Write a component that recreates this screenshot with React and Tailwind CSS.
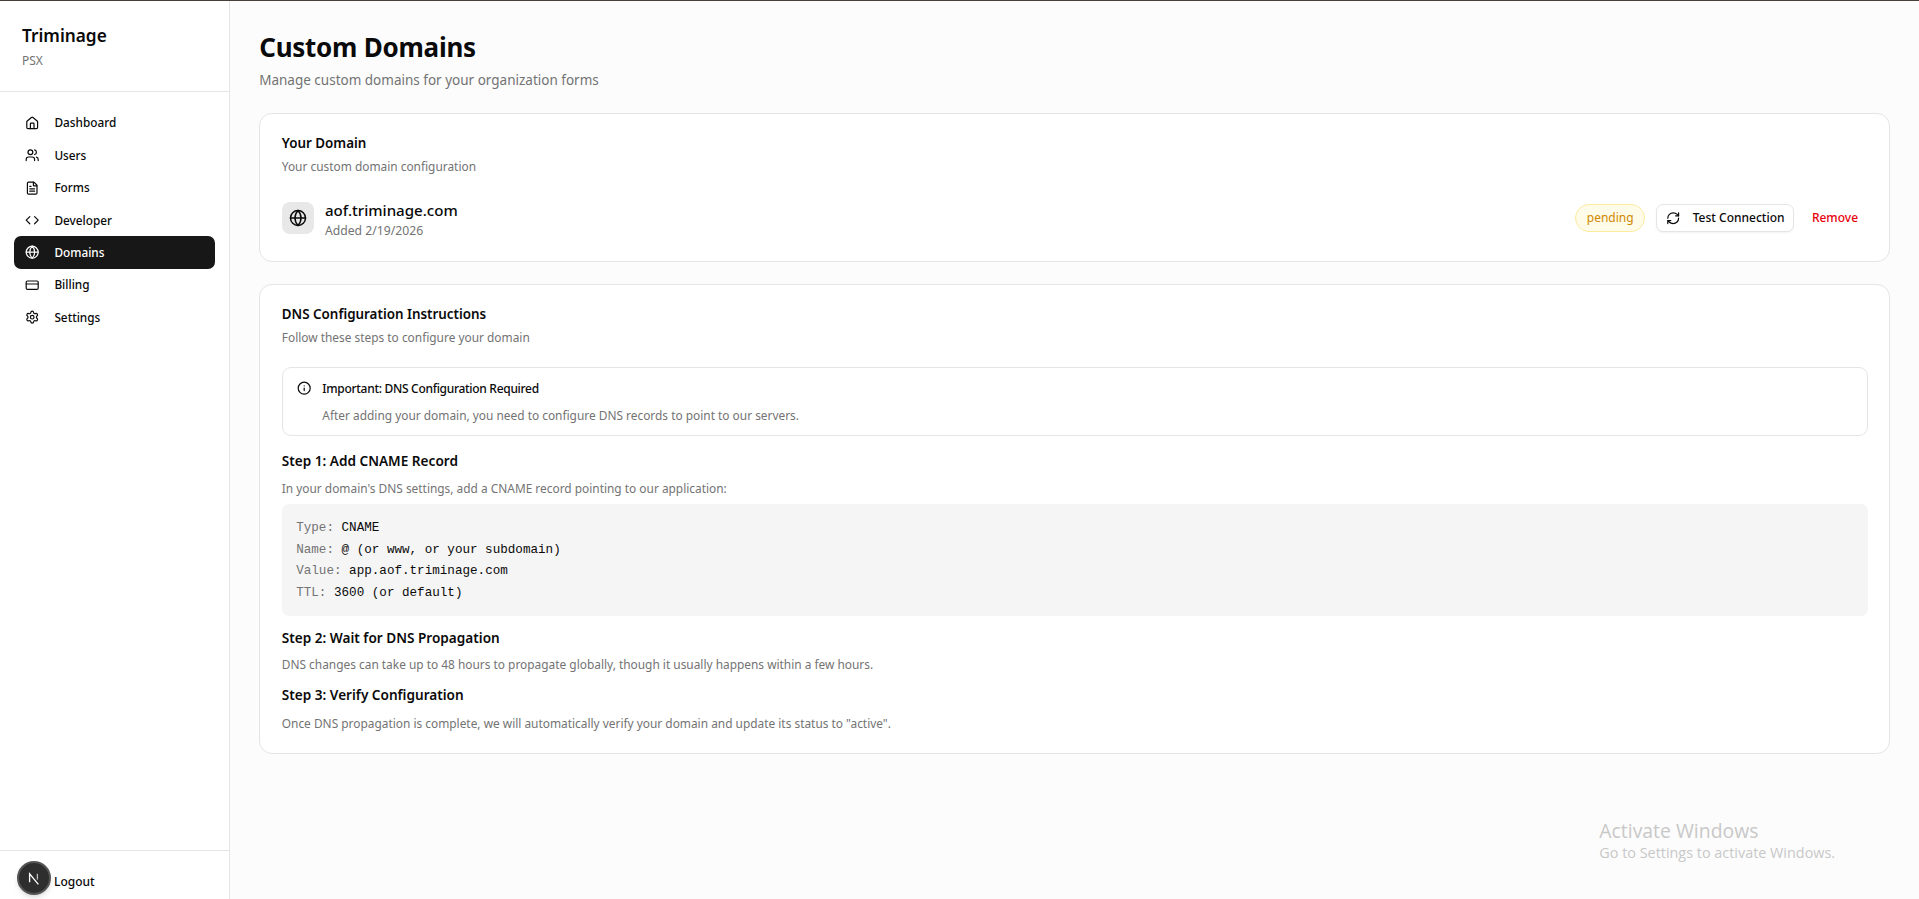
import React from "react";
import { Home, Users, FileText, Code, Globe, CreditCard, Settings, RefreshCw, Info } from "lucide-react";

const nav = [
  ["Dashboard", Home],
  ["Users", Users],
  ["Forms", FileText],
  ["Developer", Code],
  ["Domains", Globe],
  ["Billing", CreditCard],
  ["Settings", Settings],
];

function Row({ k, v }) {
  return (
    <div className="h-[21.6px] leading-[21.6px]">
      <span className="text-[#737373]">{k}:</span> <span className="text-[#0a0a0a]">{v}</span>
    </div>
  );
}

function NextLogo() {
  return (
    <svg width="16" height="16" viewBox="0 0 16 16" fill="none">
      <path d="M3.6 12.2V3.8L12.4 14.4" stroke="#fff" strokeWidth="1.3" />
      <path d="M11.4 3.8V9.6" stroke="#bbb" strokeWidth="1.3" />
    </svg>
  );
}

export default function App() {
  return (
    <div className="relative flex h-[899px] flex-col overflow-hidden bg-[#fcfcfc] font-['Noto_Sans',sans-serif] text-[#0a0a0a]">
      <div className="h-px bg-[#4a3f38]" />
      <div className="flex min-h-0 flex-1">
        <aside className="flex w-[230.4px] shrink-0 flex-col border-r border-[#e5e5e5] bg-white">
          <div className="h-[91px] border-b border-[#e5e5e5] pl-[22px] pt-[22px]">
            <div className="text-[17.25px] font-semibold leading-[26px]">Triminage</div>
            <div className="mt-[2.2px] text-[12px] leading-[20px] text-[#737373]">PSX</div>
          </div>
          <nav className="flex flex-1 flex-col px-[14.4px] pt-[14.8px]">
            {nav.map(([label, Icon]) => {
              const active = label === "Domains";
              return (
                <div
                  key={label}
                  className={
                    active
                      ? "flex h-[32.4px] w-[201px] items-center gap-[14.8px] rounded-[7px] bg-[#171717] pl-[10.8px] text-[11.8px] font-medium text-white"
                      : "flex h-[32.4px] w-[201px] items-center gap-[14.8px] rounded-[7px] pl-[10.8px] text-[11.8px] font-medium text-[#0a0a0a]"
                  }
                >
                  <Icon size={14.4} strokeWidth={2} />
                  <span className="pt-[0.6px]">{label}</span>
                </div>
              );
            })}
          </nav>
          <div className="relative h-[49px] border-t border-[#e5e5e5] pl-[54px] pt-[20.6px] text-[12px] font-medium leading-[20px]">
            Logout
            <div className="absolute left-[17px] top-[10px] flex h-[34px] w-[34px] items-center justify-center rounded-full border-2 border-[#555] bg-[#2e2e2e] shadow-md">
              <NextLogo />
            </div>
          </div>
        </aside>
        <main className="min-w-0 flex-1 px-[28.8px] pt-[28px]">
          <h1 className="text-[26px] font-bold leading-[36px] tracking-[-0.25px]">Custom Domains</h1>
          <p className="mt-[5px] text-[13.5px] leading-[20px] text-[#737373]">Manage custom domains for your organization forms</p>

          <section className="mt-[23.2px] h-[149px] rounded-[13px] border border-[#e5e5e5] bg-white px-[21.6px] pt-[18.8px]">
            <h2 className="text-[13.4px] font-semibold leading-[20px]">Your Domain</h2>
            <p className="mt-[2.7px] text-[11.9px] leading-[20px] text-[#737373]">Your custom domain configuration</p>
            <div className="mt-[19.4px] flex h-[46px] items-center justify-between">
              <div className="flex items-center gap-[10.8px]">
                <div className="flex h-[32.4px] w-[32.4px] items-center justify-center rounded-[8px] bg-[#e8e8e8]">
                  <Globe size={18} strokeWidth={2} />
                </div>
                <div className="pt-[3.4px]">
                  <div className="text-[15.1px] font-medium leading-[22px]">aof.triminage.com</div>
                  <div className="text-[12.2px] leading-[20px] text-[#737373]">Added 2/19/2026</div>
                </div>
              </div>
              <div className="flex items-center pr-[9.6px]">
                <span className="flex h-[28px] w-[70px] items-center justify-center rounded-full border border-[#fdeb9e] bg-[#fefce8] text-[12px] text-[#d08700]">pending</span>
                <button className="ml-[11.3px] flex h-[28px] w-[137.4px] items-center rounded-[7px] border border-[#e5e5e5] bg-white pl-[8.8px] text-[12px] font-medium shadow-xs">
                  <RefreshCw size={14.4} strokeWidth={2} />
                  <span className="ml-[12px]">Test Connection</span>
                </button>
                <span className="ml-[18px] text-[12px] font-medium text-[#e7000b]">Remove</span>
              </div>
            </div>
          </section>

          <section className="mt-[22px] h-[470.3px] rounded-[13px] border border-[#e5e5e5] bg-white px-[21.6px] pt-[18.6px]">
            <h2 className="text-[13.4px] font-semibold leading-[20px]">DNS Configuration Instructions</h2>
            <p className="mt-[2.8px] text-[11.9px] leading-[20px] text-[#737373]">Follow these steps to configure your domain</p>

            <div className="mt-[20.6px] h-[68.4px] rounded-[9px] border border-[#e5e5e5] bg-white pl-[14.4px] pt-[10.4px]">
              <div className="flex items-center gap-[10.8px] text-[12px] font-medium leading-[20px] tracking-[-0.3px]">
                <Info size={14.4} strokeWidth={2} />
                <span>Important: DNS Configuration Required</span>
              </div>
              <p className="ml-[25.2px] mt-[6.3px] text-[11.9px] leading-[20px] text-[#737373]">After adding your domain, you need to configure DNS records to point to our servers.</p>
            </div>

            <h3 className="mt-[15.6px] text-[13.6px] font-semibold leading-[20px]">Step 1: Add CNAME Record</h3>
            <p className="mt-[6.4px] text-[11.9px] leading-[20px] text-[#737373]">In your domain's DNS settings, add a CNAME record pointing to our application:</p>
            <div className="mt-[6.3px] h-[112px] rounded-[7px] bg-[#f5f5f5] px-[14.4px] pt-[14.2px] font-['Liberation_Mono',monospace] text-[12.6px]">
              <Row k="Type" v="CNAME" />
              <Row k="Name" v="@ (or www, or your subdomain)" />
              <Row k="Value" v="app.aof.triminage.com" />
              <Row k="TTL" v="3600 (or default)" />
            </div>

            <h3 className="mt-[12.3px] text-[13.6px] font-semibold leading-[20px]">Step 2: Wait for DNS Propagation</h3>
            <p className="mt-[5.4px] text-[11.9px] leading-[20px] text-[#737373]">DNS changes can take up to 48 hours to propagate globally, though it usually happens within a few hours.</p>
            <h3 className="mt-[11.6px] text-[13.6px] font-semibold leading-[20px]">Step 3: Verify Configuration</h3>
            <p className="mt-[7.4px] text-[11.9px] leading-[20px] text-[#737373]">Once DNS propagation is complete, we will automatically verify your domain and update its status to "active".</p>
          </section>
        </main>
      </div>
      <div className="absolute left-[1599.3px] top-[818.5px] font-['Open_Sans',sans-serif] text-[#c8c8c8]">
        <div className="text-[19.4px] leading-[24px]">Activate Windows</div>
        <div className="text-[14.4px] leading-[20px]">Go to Settings to activate Windows.</div>
      </div>
    </div>
  );
}
